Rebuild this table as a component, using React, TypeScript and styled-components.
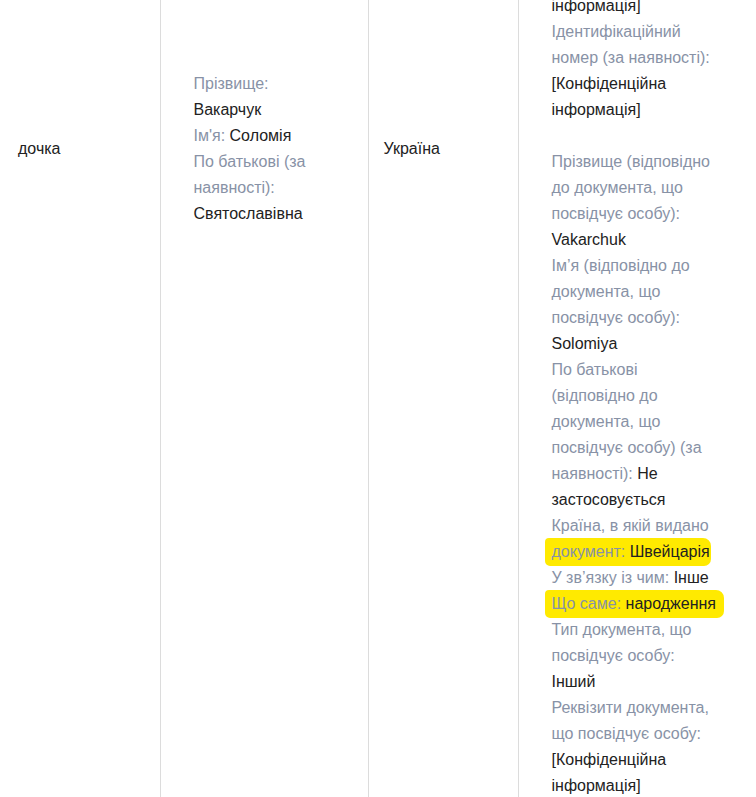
import React from 'react';
import styled, { createGlobalStyle } from 'styled-components';

const GlobalStyle = createGlobalStyle`
    html, body {
        margin: 0;
        padding: 0;
        background: #ffffff;
    }
    body {
        font-family: 'Liberation Sans', Arial, sans-serif;
    }
`;

const Viewport = styled.div`
    width: 756px;
    height: 797px;
    overflow: hidden;
    background: #ffffff;
`;

const Table = styled.table`
    border-collapse: collapse;
    table-layout: fixed;
    width: 756px;
    margin-top: -7px;
    font-size: 16px;
    line-height: 26px;
    color: #222222;
`;

const Cell = styled.td<{ $width: number; $padTop: number; $padLeft: number; $padRight: number; $first?: boolean; $last?: boolean }>`
    width: ${(p) => p.$width}px;
    box-sizing: border-box;
    vertical-align: top;
    padding: ${(p) => p.$padTop}px ${(p) => p.$padRight}px 0 ${(p) => p.$padLeft}px;
    border-left: ${(p) => (p.$first ? 'none' : '1px solid #dcdcdc')};
    border-right: ${(p) => (p.$last ? '1px solid #dcdcdc' : 'none')};
    height: 1000px;
`;

const Label = styled.span`
    color: #8892a6;
`;

const Value = styled.span`
    color: #222222;
`;

const Gap = styled.div`
    height: 26px;
`;

const Highlight = styled.span<{ $tail: number }>`
    background: #ffea00;
    padding: 5px ${(p) => p.$tail}px 6px 7px;
    margin-left: -7px;
    margin-right: -${(p) => p.$tail}px;
    border-radius: 4px 8px 7px 5px;
`;

interface FieldProps {
    label: string;
    value: string;
}

const Field = ({ label, value }: FieldProps) => (
    <div>
        <Label>{label}</Label> <Value>{value}</Value>
    </div>
);

export default function App() {
    return (
        <>
            <GlobalStyle />
            <Viewport>
                <Table>
                    <tbody>
                        <tr>
                            <Cell $width={160} $padTop={143} $padLeft={18} $padRight={20} $first>
                                дочка
                            </Cell>
                            <Cell $width={208} $padTop={78} $padLeft={33} $padRight={33}>
                                <Field label="Прізвище:" value="Вакарчук" />
                                <Field label="Ім'я:" value="Соломія" />
                                <Field label="По батькові (за наявності):" value="Святославівна" />
                            </Cell>
                            <Cell $width={150} $padTop={143} $padLeft={15} $padRight={16}>
                                Україна
                            </Cell>
                            <Cell $width={238} $padTop={0} $padLeft={33} $padRight={38} $last>
                                <div>
                                    <Value>інформація]</Value>
                                </div>
                                <Field label="Ідентифікаційний номер (за наявності):" value="[Конфіденційна інформація]" />
                                <Gap />
                                <Field label="Прізвище (відповідно до документа, що посвідчує особу):" value="Vakarchuk" />
                                <Field label="Ім’я (відповідно до документа, що посвідчує особу):" value="Solomiya" />
                                <Field
                                    label="По батькові (відповідно до документа, що посвідчує особу) (за наявності):"
                                    value="Не застосовується"
                                />
                                <div>
                                    <Label>Країна, в якій видано</Label>{' '}
                                    <Highlight $tail={1}>
                                        <Label>документ:</Label> <Value>Швейцарія</Value>
                                    </Highlight>
                                </div>
                                <Field label="У зв’язку із чим:" value="Інше" />
                                <div>
                                    <Highlight $tail={8}>
                                        <Label>Що саме:</Label> <Value>народження</Value>
                                    </Highlight>
                                </div>
                                <Field label="Тип документа, що посвідчує особу:" value="Інший" />
                                <Field label="Реквізити документа, що посвідчує особу:" value="[Конфіденційна інформація]" />
                            </Cell>
                        </tr>
                    </tbody>
                </Table>
            </Viewport>
        </>
    );
}
